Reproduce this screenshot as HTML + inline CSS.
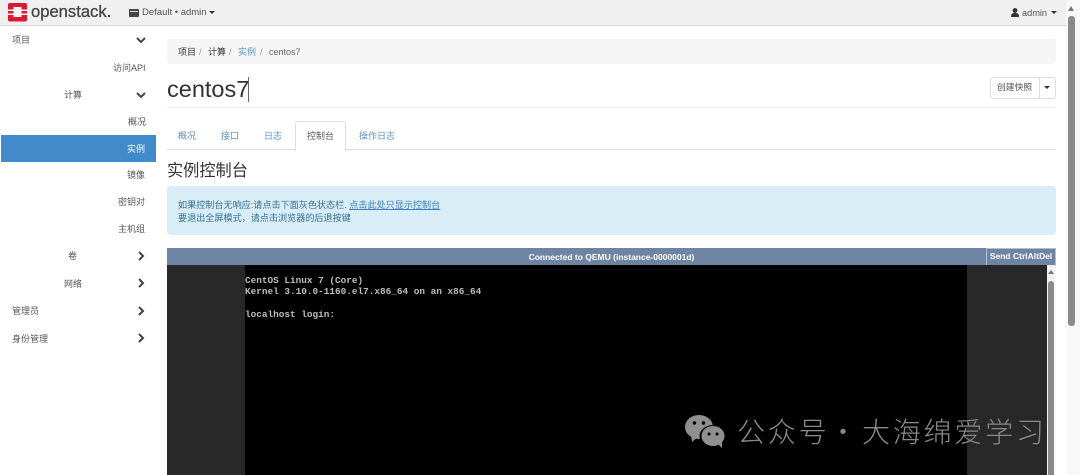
<!DOCTYPE html>
<html><head><meta charset="utf-8"><style>
html,body{margin:0;padding:0;width:1080px;height:475px;overflow:hidden;background:#fff;font-family:"Liberation Sans","Noto Sans CJK SC",sans-serif;color:#333}
.a{position:absolute;white-space:nowrap;line-height:14px}
.s{font-size:9px;color:#555}
.e{font-size:9.5px;color:#555}
.l{color:#5a93c5;font-size:9px}
.w{position:absolute;white-space:nowrap;top:414px;font-size:28px;line-height:34px;color:#8a8a8a;letter-spacing:2.800px;font-family:'Noto Sans CJK SC',sans-serif;font-weight:300}
</style></head><body>
<div class="a" style="left:0;top:0;width:1066px;height:25px;background:#f0f0f0;border-bottom:1px solid #d9d9d9"></div>
<svg class="a" style="left:8px;top:3px" width="20" height="19" viewBox="0 0 20 19"><rect width="19" height="18.500" rx="2" fill="#da1a32"/><rect x="5.500" y="4" width="8" height="10" fill="#f4f4f4"/><rect x="0" y="6.500" width="5.500" height="1.500" fill="#f4f4f4"/><rect x="0" y="10.500" width="5.500" height="1.500" fill="#f4f4f4"/><rect x="13.500" y="6.500" width="5.500" height="1.500" fill="#f4f4f4"/><rect x="13.500" y="10.500" width="5.500" height="1.500" fill="#f4f4f4"/></svg>
<div class="a" style="left:31px;top:2px;font-size:16.600px;line-height:20px;color:#444;-webkit-text-stroke:.3px #444">openstack.</div>
<svg class="a" style="left:129px;top:9px" width="10" height="8"><rect width="10" height="8" rx="1" fill="#444"/><rect x="1" y="2" width="8" height="1" fill="#ddd"/></svg>
<div class="a e" style="left:142px;top:6px">Default • admin</div>
<div class="a" style="left:209px;top:11px;border:3px solid transparent;border-top-color:#333;border-bottom:0"></div>
<svg class="a" style="left:1011px;top:8px" width="8" height="10"><circle cx="4" cy="2.500" r="2.400" fill="#333"/><path d="M0 9c0-3 1-4 4-4s4 1 4 4z" fill="#333"/></svg>
<div class="a e" style="left:1022px;top:6px;font-size:9.200px">admin</div>
<div class="a" style="left:1051px;top:11px;border:3px solid transparent;border-top-color:#333;border-bottom:0"></div>

<!-- sidebar -->
<div class="a s" style="left:12px;top:33px">项目</div>
<div class="a s" style="left:113px;top:61px">访问API</div>
<div class="a s" style="left:64px;top:88px">计算</div>
<div class="a s" style="left:128px;top:115px">概况</div>
<div class="a" style="left:1px;top:135px;width:155px;height:27px;background:#428bca"></div>
<div class="a s" style="left:127px;top:142px;color:#fff">实例</div>
<div class="a s" style="left:127px;top:168px">镜像</div>
<div class="a s" style="left:118px;top:195px">密钥对</div>
<div class="a s" style="left:118px;top:222px">主机组</div>
<div class="a s" style="left:68px;top:249px">卷</div>
<div class="a s" style="left:64px;top:277px">网络</div>
<div class="a s" style="left:12px;top:304px">管理员</div>
<div class="a s" style="left:12px;top:332px">身份管理</div>
<svg class="a" style="left:0;top:0" width="160" height="350" fill="none" stroke="#444" stroke-width="2">
<path d="M137 38l4 4 4-4M137 93l4 4 4-4M139 252l4 4-4 4M139 279l4 4-4 4M139 307l4 4-4 4M139 334l4 4-4 4"/></svg>

<!-- breadcrumb -->
<div class="a" style="left:167px;top:39px;width:889px;height:25px;background:#f5f5f5;border-radius:3px"></div>
<div class="a s" style="left:178px;top:45px;color:#333">项目</div><div class="a s" style="left:199px;top:45px;color:#999">/</div>
<div class="a s" style="left:208px;top:45px;color:#333">计算</div><div class="a s" style="left:229px;top:45px;color:#999">/</div>
<div class="a l" style="left:238px;top:45px">实例</div><div class="a s" style="left:260px;top:45px;color:#999">/</div>
<div class="a e" style="left:269px;top:45px;color:#666;font-size:9px">centos7</div>

<div class="a" style="left:167px;top:74px;font-size:23.500px;line-height:30px;color:#333">centos7</div>
<div class="a" style="left:248px;top:77px;width:1px;height:25px;background:#666"></div>
<div class="a" style="left:167px;top:107px;width:889px;height:1px;background:#eee"></div>

<div class="a" style="left:990px;top:77px;width:48px;height:20px;border:1px solid #ddd;border-radius:3px 0 0 3px"></div>
<div class="a" style="left:1039px;top:77px;width:16px;height:20px;border:1px solid #ddd;border-left:0;border-radius:0 3px 3px 0"></div>
<div class="a s" style="left:997px;top:80px;font-size:8.800px">创建快照</div>
<div class="a" style="left:1044px;top:86px;border:3px solid transparent;border-top-color:#333;border-bottom:0"></div>

<!-- tabs -->
<div class="a" style="left:167px;top:149px;width:889px;height:1px;background:#ddd"></div>
<div class="a" style="left:295px;top:121px;width:49px;height:29px;background:#fff;border:1px solid #ddd;border-bottom:0;border-radius:3px 3px 0 0"></div>
<div class="a l" style="left:178px;top:129px">概况</div>
<div class="a l" style="left:221px;top:129px">接口</div>
<div class="a l" style="left:264px;top:129px">日志</div>
<div class="a s" style="left:307px;top:129px">控制台</div>
<div class="a l" style="left:359px;top:129px">操作日志</div>

<div class="a" style="left:167px;top:160px;font-size:16.200px;line-height:22px;color:#333">实例控制台</div>

<div class="a" style="left:167px;top:186px;width:889px;height:49px;background:#d9edf7;border-radius:4px"></div>
<div class="a" style="left:178px;top:198px;font-size:9.100px;color:#31708f">如果控制台无响应:请点击下面灰色状态栏. <span style="color:#3b7fb5;text-decoration:underline">点击此处只显示控制台</span></div>
<div class="a" style="left:178px;top:211px;font-size:9.100px;color:#31708f">要退出全屏模式，请点击浏览器的后退按键</div>

<!-- console -->
<div class="a" style="left:167px;top:248px;width:889px;height:17px;background:#6e84a3"></div>
<div class="a" style="left:167px;top:250px;width:889px;text-align:center;font-size:8.500px;font-weight:bold;color:#fff">Connected to QEMU (instance-0000001d)</div>
<div class="a" style="left:986px;top:248px;width:68px;height:16px;border:1px solid #b5bdc9;font-size:8.500px;font-weight:bold;color:#fff;text-align:center;line-height:15px">Send CtrlAltDel</div>
<div class="a" style="left:167px;top:265px;width:880px;height:210px;background:#282828"></div>
<div class="a" style="left:245px;top:265px;width:722px;height:210px;background:#000"></div>
<div class="a" style="left:1047px;top:265px;width:8px;height:210px;background:#f1f1f1"></div>
<div class="a" style="left:1048px;top:281px;width:6px;height:194px;background:#8a8a8a;border-radius:3px 3px 0 0"></div>
<div class="a" style="left:1048px;top:270px;border:3px solid transparent;border-bottom:4px solid #777;border-top:0"></div>
<pre class="a" style="left:245px;top:275px;margin:0;white-space:pre;font-family:'Liberation Mono',monospace;font-size:9.400px;line-height:11.400px;color:#bdbdbd;font-weight:bold">CentOS Linux 7 (Core)
Kernel 3.10.0-1160.el7.x86_64 on an x86_64

localhost login:</pre>

<!-- page scrollbar -->
<div class="a" style="left:1066px;top:0;width:14px;height:475px;background:#f8f8f8"></div>
<div class="a" style="left:1068px;top:16px;width:7px;height:310px;background:#8a8a8a;border-radius:3px"></div>
<div class="a" style="left:1068px;top:6px;border:3.500px solid transparent;border-bottom:5px solid #777;border-top:0"></div>

<!-- watermark -->
<svg class="a" style="left:685px;top:413px" width="44" height="36" viewBox="0 0 44 36"><ellipse cx="14" cy="14" rx="14" ry="12" fill="#8f8f8f"/><path d="M6 22l1 7 6-5z" fill="#8f8f8f"/><ellipse cx="28" cy="23" rx="13.500" ry="11" fill="#000"/><ellipse cx="28" cy="23" rx="11.500" ry="10" fill="#8f8f8f"/><path d="M33 31l4 4v-7z" fill="#8f8f8f"/><circle cx="9.500" cy="10" r="1.700" fill="#000"/><circle cx="18.500" cy="10" r="1.700" fill="#000"/><circle cx="24" cy="21" r="1.500" fill="#000"/><circle cx="32" cy="21" r="1.500" fill="#000"/></svg>
<div class="w" style="left:737px">公众号</div>
<div class="w" style="left:829px;width:28px;text-align:center;letter-spacing:0">·</div>
<div class="w" style="left:862px">大海绵爱学习</div>
</body></html>
